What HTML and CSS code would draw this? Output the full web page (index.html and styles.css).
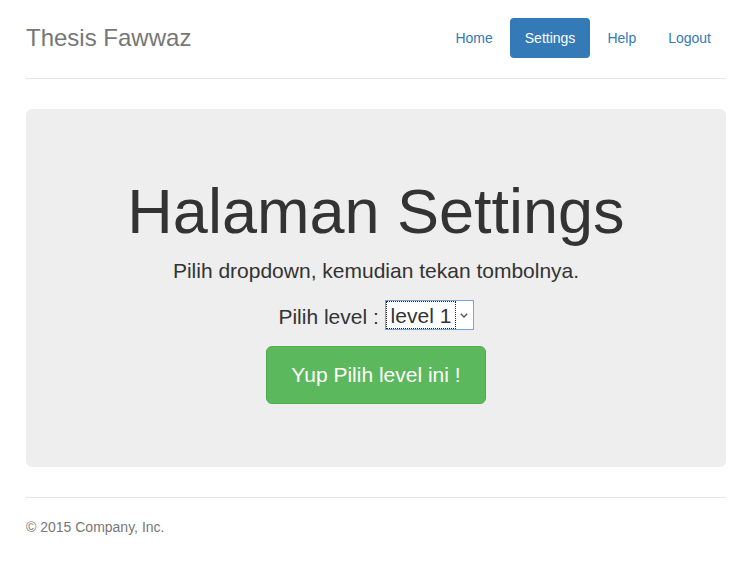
FILE: index.html
```html
<!DOCTYPE html>
<html lang="id">
<head>
<meta charset="utf-8">
<title>Thesis Fawwaz</title>
<link rel="stylesheet" href="styles.css">
</head>
<body>
<div class="container">
  <header class="header">
    <h3 class="brand">Thesis Fawwaz</h3>
    <nav>
      <ul class="nav-pills">
        <li><a href="#">Home</a></li>
        <li class="active"><a href="#">Settings</a></li>
        <li><a href="#">Help</a></li>
        <li><a href="#">Logout</a></li>
      </ul>
    </nav>
  </header>

  <main class="jumbotron">
    <h1>Halaman Settings</h1>
    <p class="lead">Pilih dropdown, kemudian tekan tombolnya.</p>
    <form>
      <p class="lead">Pilih level : <span class="select-wrap"><select class="level-select"><option>level 1</option><option>level 2</option><option>level 3</option></select><span class="chev"><svg width="8" height="5" viewBox="0 0 8 5"><path d="M0.8 0.8 L4 4 L7.2 0.8" fill="none" stroke="#555" stroke-width="1.3"/></svg></span></span></p>
      <p class="btn-row"><button type="button" class="btn-success">Yup Pilih level ini !</button></p>
    </form>
  </main>

  <footer class="footer">
    <p>&copy; 2015 Company, Inc.</p>
  </footer>
</div>
</body>
</html>
```

FILE: styles.css
```css
html, body {
  margin: 0;
  padding: 0;
  background: #fff;
}
body {
  font-family: "Liberation Sans", Arial, Helvetica, sans-serif;
  font-size: 14px;
  line-height: 20px;
  color: #333;
}
.container {
  width: 700px;
  padding: 18px 24px 0 26px;
}
.header {
  display: flex;
  justify-content: space-between;
  align-items: center;
  padding-bottom: 20px;
  border-bottom: 1px solid #e5e5e5;
}
.brand {
  margin: 0;
  font-size: 24px;
  line-height: 40px;
  font-weight: normal;
  color: #777;
}
.nav-pills {
  display: flex;
  gap: 2px;
  list-style: none;
  margin: 0;
  padding: 0;
}
.nav-pills a {
  display: block;
  padding: 10px 15px;
  border-radius: 4px;
  color: #337ab7;
  text-decoration: none;
  line-height: 20px;
}
.nav-pills .active a {
  background: #337ab7;
  color: #fff;
}
.jumbotron {
  display: block;
  margin-top: 30px;
  padding: 48px 60px;
  background: #eee;
  border-radius: 6px;
  text-align: center;
}
.jumbotron h1 {
  margin: 20px 0 10px;
  font-size: 63px;
  line-height: 1.1;
  font-weight: normal;
  color: #333;
}
.jumbotron form {
  margin: 0;
}
.lead {
  margin: 0 0 15px;
  font-size: 21px;
  line-height: 1.4;
}
.select-wrap {
  display: inline-flex;
  align-items: stretch;
  vertical-align: baseline;
  background: #fff;
  border: 1px solid #6fa6e0;
  height: 30px;
  margin: -1px 0;
  box-sizing: border-box;
}
.level-select {
  -webkit-appearance: none;
  appearance: none;
  margin: 0;
  border: 1px dotted #222;
  border-radius: 0;
  background: transparent;
  font-family: "Liberation Sans", Arial, Helvetica, sans-serif;
  font-size: 21px;
  color: #333;
  padding: 2px 3px 0 4px;
  height: 28px;
  box-sizing: border-box;
  outline: none;
}
.chev {
  display: flex;
  align-items: center;
  justify-content: center;
  width: 17px;
  padding-top: 2px;
}
.btn-row {
  margin: 0 0 15px;
}
.btn-success {
  display: inline-block;
  font-family: "Liberation Sans", Arial, Helvetica, sans-serif;
  font-size: 21px;
  line-height: 28px;
  padding: 14px 24px;
  color: #fff;
  background: #5cb85c;
  border: 1px solid #4cae4c;
  border-radius: 6px;
  cursor: pointer;
}
.footer {
  margin-top: 30px;
  padding-top: 19px;
  border-top: 1px solid #e5e5e5;
  color: #777;
}
.footer p {
  margin: 0 0 10px;
}
```
